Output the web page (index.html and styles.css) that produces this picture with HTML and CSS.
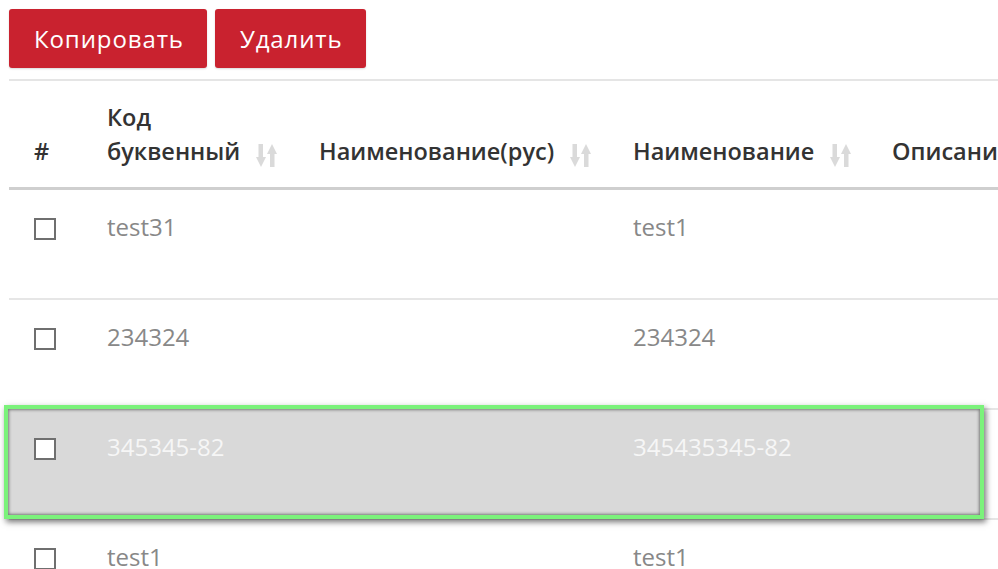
FILE: index.html
```html
<!DOCTYPE html>
<html lang="ru">
<head>
<meta charset="utf-8">
<title>Справочник</title>
<link rel="stylesheet" href="styles.css">
</head>
<body>
<div class="page">
  <div class="toolbar">
    <button class="btn" type="button">Копировать</button>
    <button class="btn" type="button">Удалить</button>
  </div>

  <div class="grid">
    <div class="row head">
      <div class="cell">#</div>
      <div class="cell sortable">
        <span>Код<br>буквенный</span>
        <svg class="sort" viewBox="0 0 21 23" aria-hidden="true">
          <rect x="2.5" y="0" width="4.5" height="15"/>
          <polygon points="0,13 10,13 5,23"/>
          <rect x="14" y="8" width="4.5" height="15"/>
          <polygon points="11,10 21,10 16,0"/>
        </svg>
      </div>
      <div class="cell sortable">
        <span>Наименование(рус)</span>
        <svg class="sort" viewBox="0 0 21 23" aria-hidden="true">
          <rect x="2.5" y="0" width="4.5" height="15"/>
          <polygon points="0,13 10,13 5,23"/>
          <rect x="14" y="8" width="4.5" height="15"/>
          <polygon points="11,10 21,10 16,0"/>
        </svg>
      </div>
      <div class="cell sortable">
        <span>Наименование</span>
        <svg class="sort" viewBox="0 0 21 23" aria-hidden="true">
          <rect x="2.5" y="0" width="4.5" height="15"/>
          <polygon points="0,13 10,13 5,23"/>
          <rect x="14" y="8" width="4.5" height="15"/>
          <polygon points="11,10 21,10 16,0"/>
        </svg>
      </div>
      <div class="cell">Описание</div>
    </div>

    <div class="row">
      <div class="cell"><span class="check"></span></div>
      <div class="cell">test31</div>
      <div class="cell"></div>
      <div class="cell">test1</div>
      <div class="cell"></div>
    </div>

    <div class="row">
      <div class="cell"><span class="check"></span></div>
      <div class="cell">234324</div>
      <div class="cell"></div>
      <div class="cell">234324</div>
      <div class="cell"></div>
    </div>

    <div class="row selected">
      <div class="cell"><span class="check"></span></div>
      <div class="cell">345345-82</div>
      <div class="cell"></div>
      <div class="cell">345435345-82</div>
      <div class="cell"></div>
    </div>

    <div class="row">
      <div class="cell"><span class="check"></span></div>
      <div class="cell">test1</div>
      <div class="cell"></div>
      <div class="cell">test1</div>
      <div class="cell"></div>
    </div>
  </div>
</div>
</body>
</html>
```

FILE: styles.css
```css
html, body {
  margin: 0;
  padding: 0;
  background: #fff;
}

body {
  font-family: "Open Sans", "Noto Sans", sans-serif;
  font-size: 24px;
  line-height: 34px;
  color: #888;
  overflow: hidden;
}

.page {
  width: 998px;
  height: 569px;
  overflow: hidden;
  padding-left: 9px;
  box-sizing: border-box;
}

/* action buttons */
.toolbar {
  display: flex;
  gap: 8px;
  padding: 9px 0 11px;
}

.btn {
  height: 59px;
  padding: 0 23px 0 25px;
  border: 0;
  border-radius: 3px;
  background: #c9222f;
  color: #fff;
  font-family: inherit;
  font-size: 24px;
  letter-spacing: 0.9px;
  line-height: 59px;
  box-shadow: 0 1px 2px rgba(0, 0, 0, 0.15);
}

/* data grid */
.grid {
  border-top: 2px solid #e5e5e5;
}

.row {
  display: grid;
  grid-template-columns: 73px 212px 314px 259px 1fr;
  padding-left: 25px;
  height: 110px;
  box-sizing: border-box;
  border-bottom: 2px solid #e6e6e6;
  position: relative;
}

.cell {
  white-space: nowrap;
  overflow: hidden;
  padding-top: 20px;
}

.row.head {
  height: auto;
  border-bottom: 3px solid #cfcfcf;
  color: #333;
  font-size: 23.5px;
  font-weight: 600;
}

.row.head .cell {
  display: flex;
  align-items: flex-end;
  padding: 19px 0 19px;
}

.sort {
  width: 21px;
  height: 23px;
  margin: 0 0 1px 16px;
  fill: #dadada;
  flex: none;
}

.check {
  display: block;
  width: 22px;
  height: 22px;
  box-sizing: border-box;
  border: 2px solid #6f6f6f;
  background: #fff;
  margin-top: 8px;
}

/* highlighted row frame */
.row.selected {
  color: #f6f6f6;
}

.row.selected::before {
  content: "";
  position: absolute;
  left: -5px;
  right: 14px;
  top: -5px;
  bottom: -1px;
  border: 4px solid #7bf27b;
  background: #d9d9d9;
  box-shadow: 2px 3px 6px rgba(0, 0, 0, 0.55), inset 0 0 3px 1px rgba(0, 0, 0, 0.45);
}

.row.selected .cell {
  position: relative;
}
```
